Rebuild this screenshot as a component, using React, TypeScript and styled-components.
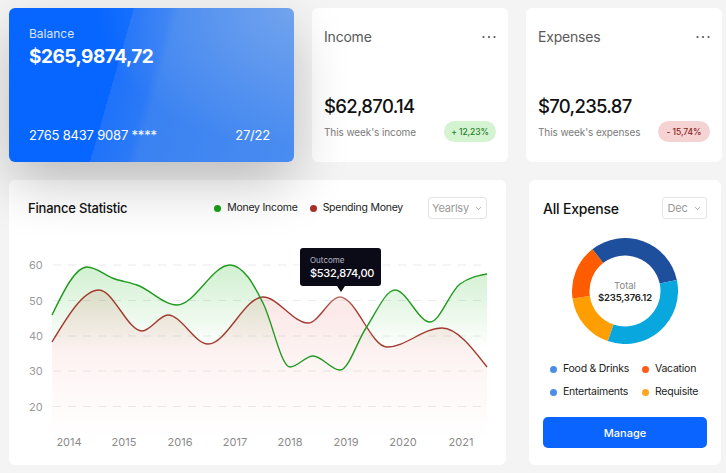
import React from 'react';
import styled, { createGlobalStyle } from 'styled-components';
import { ChevronDown } from 'lucide-react';

const Global = createGlobalStyle`
  html, body { margin: 0; padding: 0; background: #f4f4f4; }
  body { font-family: Inter, "Noto Sans", sans-serif; -webkit-font-smoothing: antialiased; }
  * { box-sizing: border-box; }
`;

const Page = styled.div`
  width: 726px;
  height: 473px;
  overflow: hidden;
  padding: 8px 0 0 9px;
  display: flex;
  flex-direction: column;
  gap: 18px;
`;

const TopRow = styled.div`
  display: flex;
  gap: 18px;
  height: 154px;
`;

const BottomRow = styled.div`
  display: flex;
  gap: 23px;
  height: 285px;
`;

const Card = styled.div`
  background: #fff;
  border-radius: 6px;
`;

const BalanceCard = styled.div`
  position: relative;
  z-index: 2;
  width: 285px;
  border-radius: 6px;
  padding: 18px 24px 19px 20px;
  display: flex;
  flex-direction: column;
  color: #fff;
  background:
    radial-gradient(ellipse 70% 90% at 100% 0%, rgba(150, 185, 235, 0.55), rgba(150, 185, 235, 0) 100%),
    linear-gradient(106deg, #0766ff 0%, #0766ff 38%, #1f72fa 38%, #2a79f6 49%, #3a82f2 52%, #4a8cf0 100%);
  box-shadow: 0 22px 56px -2px rgba(0, 0, 0, 0.24);
`;

const BalanceLabel = styled.div`
  font-size: 12px;
  line-height: 15px;
  color: rgba(255, 255, 255, 0.85);
`;

const BalanceAmount = styled.div`
  margin-top: 4px;
  font-size: 19px;
  line-height: 24px;
  font-weight: 700;
  letter-spacing: -0.5px;
`;

const BalanceFooter = styled.div`
  margin-top: auto;
  display: flex;
  justify-content: space-between;
  font-size: 13px;
  line-height: 16px;
  letter-spacing: -0.2px;
`;

const StatCard = styled(Card)`
  width: 196px;
  padding: 20px 12px 20px 12px;
  display: flex;
  flex-direction: column;
`;

const StatHeader = styled.div`
  display: flex;
  justify-content: space-between;
  align-items: center;
`;

const StatTitle = styled.div`
  font-size: 14px;
  line-height: 17px;
  color: #5a5a5a;
  letter-spacing: -0.2px;
`;

const StatAmount = styled.div`
  margin-top: auto;
  font-size: 18.5px;
  line-height: 24px;
  font-weight: 500;
  color: #111;
  letter-spacing: -0.7px;
`;

const StatFooter = styled.div`
  margin-top: 3px;
  display: flex;
  justify-content: space-between;
  align-items: center;
`;

const StatSub = styled.div`
  font-size: 10px;
  color: #7a7a7a;
  letter-spacing: -0.1px;
`;

const Badge = styled.span<{ $tone: 'up' | 'down' }>`
  display: inline-flex;
  align-items: center;
  justify-content: center;
  height: 21px;
  width: 52px;
  border-radius: 11px;
  font-size: 8.5px;
  font-weight: 500;
  letter-spacing: -0.1px;
  background: ${(p) => (p.$tone === 'up' ? '#d3f3d1' : '#f5d3d3')};
  color: ${(p) => (p.$tone === 'up' ? '#2b7d2b' : '#8c1d1d')};
`;

const FinanceCard = styled(Card)`
  position: relative;
  width: 497px;
`;

const FinanceHeader = styled.div`
  display: flex;
  align-items: center;
  height: 39px;
  padding: 17px 19px 0 19px;
`;

const CardTitle = styled.div<{ $size?: number }>`
  font-size: ${(p) => p.$size ?? 13}px;
  font-weight: 500;
  color: #111;
  letter-spacing: -0.2px;
`;

const Legend = styled.div`
  margin-left: auto;
  display: flex;
  align-items: center;
  gap: 12px;
`;

const LegendItem = styled.div`
  display: flex;
  align-items: center;
  gap: 6px;
  font-size: 10.5px;
  line-height: 16px;
  color: #222;
  letter-spacing: -0.25px;
`;

const Dot = styled.span<{ $color: string }>`
  width: 7px;
  height: 7px;
  border-radius: 50%;
  background: ${(p) => p.$color};
  flex: none;
`;

const Dropdown = styled.div<{ $width: number; $gap?: number }>`
  margin-left: ${(p) => p.$gap ?? 0}px;
  width: ${(p) => p.$width}px;
  height: 22px;
  border: 1px solid #e4e4e4;
  border-radius: 3px;
  display: flex;
  align-items: center;
  justify-content: center;
  gap: 5px;
  font-size: 11px;
  color: #999;
  letter-spacing: -0.2px;
`;

const ChartSvg = styled.svg`
  display: block;
  margin-top: 11px;
`;

const Tooltip = styled.div`
  position: absolute;
  left: 291px;
  top: 68px;
  width: 81px;
  height: 38px;
  padding: 7px 0 0 10px;
  background: #0b0b18;
  border-radius: 3px;
  box-shadow: 0 6px 24px rgba(255, 255, 255, 0.9);
  &::after {
    content: '';
    position: absolute;
    left: 50%;
    bottom: -6px;
    transform: translateX(-50%);
    border-left: 4px solid transparent;
    border-right: 4px solid transparent;
    border-top: 6px solid #0b0b18;
  }
`;

const TipLabel = styled.div`
  font-size: 8px;
  line-height: 10px;
  color: #b8b8c4;
`;

const TipValue = styled.div`
  margin-top: 1px;
  font-size: 11px;
  line-height: 14px;
  font-weight: 500;
  color: #fff;
  letter-spacing: -0.3px;
`;

const ExpenseCard = styled(Card)`
  width: 192px;
  padding: 17px 14px 17px;
  display: flex;
  flex-direction: column;
`;

const ExpenseHeader = styled.div`
  display: flex;
  justify-content: space-between;
  align-items: center;
  height: 22px;
`;

const DonutWrap = styled.div`
  position: relative;
  margin: 19px auto 0;
  width: 106px;
  height: 106px;
`;

const DonutCenter = styled.div`
  position: absolute;
  inset: 0;
  display: flex;
  flex-direction: column;
  align-items: center;
  justify-content: center;
  padding-top: 2px;
`;

const DonutLabel = styled.div`
  font-size: 9.5px;
  line-height: 12px;
  color: #888;
`;

const DonutValue = styled.div`
  font-size: 9.5px;
  line-height: 12px;
  font-weight: 600;
  color: #222;
  letter-spacing: -0.2px;
`;

const LegendGrid = styled.div`
  margin-top: 17px;
  padding-left: 7px;
  display: grid;
  grid-template-columns: 92px auto;
  row-gap: 7px;
`;

const ManageButton = styled.button`
  margin-top: 17px;
  height: 31px;
  width: 100%;
  border: none;
  border-radius: 5px;
  background: #0a64ff;
  color: #fff;
  font-family: inherit;
  font-size: 11px;
  font-weight: 500;
`;

const MoreDots = () => (
  <svg width="14" height="4" viewBox="0 0 14 4">
    <circle cx="1.5" cy="2" r="1.1" fill="#555" />
    <circle cx="7" cy="2" r="1.1" fill="#555" />
    <circle cx="12.5" cy="2" r="1.1" fill="#555" />
  </svg>
);

type P = [number, number];

function monotone(pts: P[]): string {
  const n = pts.length;
  const t: number[] = new Array(n).fill(0);
  for (let i = 1; i < n - 1; i++) {
    const [x0, y0] = pts[i - 1];
    const [x1, y1] = pts[i];
    const [x2, y2] = pts[i + 1];
    const h0 = x1 - x0;
    const h1 = x2 - x1;
    const s0 = (y1 - y0) / h0;
    const s1 = (y2 - y1) / h1;
    const p = (s0 * h1 + s1 * h0) / (h0 + h1);
    t[i] = (Math.sign(s0) + Math.sign(s1)) * Math.min(Math.abs(s0), Math.abs(s1), 0.5 * Math.abs(p)) || 0;
  }
  t[0] = (3 * (pts[1][1] - pts[0][1]) / (pts[1][0] - pts[0][0]) - t[1]) / 2;
  t[n - 1] = (3 * (pts[n - 1][1] - pts[n - 2][1]) / (pts[n - 1][0] - pts[n - 2][0]) - t[n - 2]) / 2;
  let d = `M${pts[0][0]},${pts[0][1]}`;
  for (let i = 0; i < n - 1; i++) {
    const [x0, y0] = pts[i];
    const [x1, y1] = pts[i + 1];
    const dx = (x1 - x0) / 3;
    d += ` C${x0 + dx},${y0 + dx * t[i]} ${x1 - dx},${y1 - dx * t[i + 1]} ${x1},${y1}`;
  }
  return d;
}

const greenPts: P[] = [
  [52, 315], [87, 267], [115, 279], [137, 285], [177, 305], [230, 265], [248, 277],
  [263, 303], [290, 367], [313, 356], [340, 370], [366, 328], [395, 290], [430, 322],
  [460, 284], [487, 274],
];
const redPts: P[] = [
  [52, 342], [99, 290], [142, 331], [168, 315], [208, 344], [263, 297], [308, 323],
  [340, 297], [387, 347], [442, 328], [487, 367],
];

const greenLine = monotone(greenPts);
const redLine = monotone(redPts);
const greenArea = `${greenLine} L487,460 L52,460 Z`;
const redArea = `${redLine} L487,460 L52,460 Z`;

const yTicks = [
  { v: 60, y: 265 },
  { v: 50, y: 300.5 },
  { v: 40, y: 336 },
  { v: 30, y: 371 },
  { v: 20, y: 406.5 },
];
const xTicks = [
  { v: 2014, x: 69 }, { v: 2015, x: 124 }, { v: 2016, x: 180 }, { v: 2017, x: 235 },
  { v: 2018, x: 290 }, { v: 2019, x: 346 }, { v: 2020, x: 403 }, { v: 2021, x: 461 },
];

const FinanceChart = () => (
  <ChartSvg width="497" height="230" viewBox="9 230 497 230">
    <defs>
      <linearGradient id="gFill" x1="0" y1="265" x2="0" y2="350" gradientUnits="userSpaceOnUse">
        <stop offset="0" stopColor="#3cbf3c" stopOpacity="0.24" />
        <stop offset="1" stopColor="#3cbf3c" stopOpacity="0" />
      </linearGradient>
      <linearGradient id="rFill" x1="0" y1="290" x2="0" y2="440" gradientUnits="userSpaceOnUse">
        <stop offset="0" stopColor="#d9534a" stopOpacity="0.16" />
        <stop offset="0.7" stopColor="#f08a84" stopOpacity="0.05" />
        <stop offset="1" stopColor="#f08a84" stopOpacity="0" />
      </linearGradient>
    </defs>
    {yTicks.map((t) => (
      <g key={t.v}>
        <text x="29" y={t.y + 4} fontSize="11" fill="#9a9a9a" fontFamily="Inter, sans-serif">{t.v}</text>
        <line x1="53" x2="487" y1={t.y} y2={t.y} stroke="#e9e9ec" strokeWidth="1" strokeDasharray="8 7" />
      </g>
    ))}
    <path d={redArea} fill="url(#rFill)" />
    <path d={greenArea} fill="url(#gFill)" />
    <path d={redLine} fill="none" stroke="#a23a30" strokeWidth="1.4" />
    <path d={greenLine} fill="none" stroke="#1f9a1f" strokeWidth="1.4" />
    {xTicks.map((t) => (
      <text key={t.v} x={t.x} y="446" textAnchor="middle" fontSize="11" fill="#8a8a8a" fontFamily="Inter, sans-serif">{t.v}</text>
    ))}
  </ChartSvg>
);

function arcPath(cx: number, cy: number, r0: number, r1: number, a0: number, a1: number) {
  const rad = (a: number) => (a * Math.PI) / 180;
  const pt = (r: number, a: number) => [cx + r * Math.sin(rad(a)), cy - r * Math.cos(rad(a))];
  const large = a1 - a0 > 180 ? 1 : 0;
  const [ox0, oy0] = pt(r1, a0);
  const [ox1, oy1] = pt(r1, a1);
  const [ix1, iy1] = pt(r0, a1);
  const [ix0, iy0] = pt(r0, a0);
  return `M${ox0},${oy0} A${r1},${r1} 0 ${large} 1 ${ox1},${oy1} L${ix1},${iy1} A${r0},${r0} 0 ${large} 0 ${ix0},${iy0} Z`;
}

const segments = [
  { a0: -38, a1: 78, color: '#1d4f9d' },
  { a0: 78, a1: 199, color: '#08a7de' },
  { a0: 199, a1: 262, color: '#ff9e00' },
  { a0: 262, a1: 322, color: '#ff5b00' },
];

const Donut = () => (
  <DonutWrap>
    <svg width="106" height="106" viewBox="0 0 106 106">
      {segments.map((s) => (
        <path key={s.color} d={arcPath(53, 53, 35.5, 53, s.a0, s.a1)} fill={s.color} />
      ))}
    </svg>
    <DonutCenter>
      <DonutLabel>Total</DonutLabel>
      <DonutValue>$235,376.12</DonutValue>
    </DonutCenter>
  </DonutWrap>
);

const expenseLegend = [
  { label: 'Food & Drinks', color: '#4a8ee8' },
  { label: 'Vacation', color: '#ff5c1a' },
  { label: 'Entertaiments', color: '#4a8ee8' },
  { label: 'Requisite', color: '#ffa522' },
];

export default function App() {
  return (
    <>
      <Global />
      <Page>
        <TopRow>
          <BalanceCard>
            <BalanceLabel>Balance</BalanceLabel>
            <BalanceAmount>$265,9874,72</BalanceAmount>
            <BalanceFooter>
              <span>2765 8437 9087 ****</span>
              <span>27/22</span>
            </BalanceFooter>
          </BalanceCard>
          <StatCard>
            <StatHeader>
              <StatTitle>Income</StatTitle>
              <MoreDots />
            </StatHeader>
            <StatAmount>$62,870.14</StatAmount>
            <StatFooter>
              <StatSub>This week's income</StatSub>
              <Badge $tone="up">+ 12,23%</Badge>
            </StatFooter>
          </StatCard>
          <StatCard>
            <StatHeader>
              <StatTitle>Expenses</StatTitle>
              <MoreDots />
            </StatHeader>
            <StatAmount>$70,235.87</StatAmount>
            <StatFooter>
              <StatSub>This week's expenses</StatSub>
              <Badge $tone="down">- 15,74%</Badge>
            </StatFooter>
          </StatCard>
        </TopRow>
        <BottomRow>
          <FinanceCard>
            <FinanceHeader>
              <CardTitle>Finance Statistic</CardTitle>
              <Legend>
                <LegendItem><Dot $color="#15a015" />Money Income</LegendItem>
                <LegendItem><Dot $color="#a8302b" />Spending Money</LegendItem>
              </Legend>
              <Dropdown $width={59} $gap={25}>
                Yearlsy <ChevronDown size={9} strokeWidth={2} color="#999" />
              </Dropdown>
            </FinanceHeader>
            <FinanceChart />
            <Tooltip>
              <TipLabel>Outcome</TipLabel>
              <TipValue>$532,874,00</TipValue>
            </Tooltip>
          </FinanceCard>
          <ExpenseCard>
            <ExpenseHeader>
              <CardTitle $size={14}>All Expense</CardTitle>
              <Dropdown $width={45}>
                Dec <ChevronDown size={9} strokeWidth={2} color="#999" />
              </Dropdown>
            </ExpenseHeader>
            <Donut />
            <LegendGrid>
              {expenseLegend.map((l) => (
                <LegendItem key={l.label}>
                  <Dot $color={l.color} />
                  {l.label}
                </LegendItem>
              ))}
            </LegendGrid>
            <ManageButton>Manage</ManageButton>
          </ExpenseCard>
        </BottomRow>
      </Page>
    </>
  );
}
